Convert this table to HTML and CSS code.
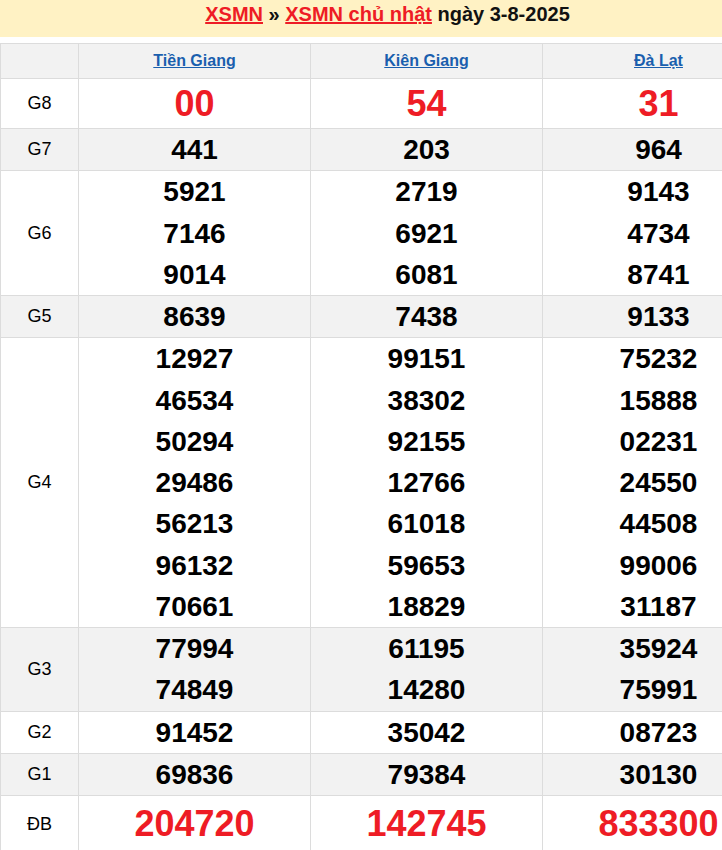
FILE: index.html
```html
<!DOCTYPE html>
<html lang="vi">
<head>
<meta charset="utf-8">
<title>XSMN chủ nhật ngày 3-8-2025</title>
<link rel="stylesheet" href="styles.css">
</head>
<body>
<div class="page">
  <h2 class="title"><a href="#">XSMN</a> » <a href="#">XSMN chủ nhật</a> ngày 3-8-2025</h2>
  <table class="result">
    <colgroup><col class="c-label"><col class="c-prov"><col class="c-prov"><col class="c-prov"></colgroup>
    <tr class="head">
      <th></th>
      <th><a href="#">Tiền Giang</a></th>
      <th><a href="#">Kiên Giang</a></th>
      <th><a href="#">Đà Lạt</a></th>
    </tr>
    <tr class="g8">
      <td class="label">G8</td>
      <td><div class="n big">00</div></td>
      <td><div class="n big">54</div></td>
      <td><div class="n big">31</div></td>
    </tr>
    <tr class="alt">
      <td class="label">G7</td>
      <td><div class="n">441</div></td>
      <td><div class="n">203</div></td>
      <td><div class="n">964</div></td>
    </tr>
    <tr>
      <td class="label">G6</td>
      <td><div class="n">5921</div><div class="n">7146</div><div class="n">9014</div></td>
      <td><div class="n">2719</div><div class="n">6921</div><div class="n">6081</div></td>
      <td><div class="n">9143</div><div class="n">4734</div><div class="n">8741</div></td>
    </tr>
    <tr class="alt">
      <td class="label">G5</td>
      <td><div class="n">8639</div></td>
      <td><div class="n">7438</div></td>
      <td><div class="n">9133</div></td>
    </tr>
    <tr>
      <td class="label">G4</td>
      <td><div class="n">12927</div><div class="n">46534</div><div class="n">50294</div><div class="n">29486</div><div class="n">56213</div><div class="n">96132</div><div class="n">70661</div></td>
      <td><div class="n">99151</div><div class="n">38302</div><div class="n">92155</div><div class="n">12766</div><div class="n">61018</div><div class="n">59653</div><div class="n">18829</div></td>
      <td><div class="n">75232</div><div class="n">15888</div><div class="n">02231</div><div class="n">24550</div><div class="n">44508</div><div class="n">99006</div><div class="n">31187</div></td>
    </tr>
    <tr class="alt">
      <td class="label">G3</td>
      <td><div class="n">77994</div><div class="n">74849</div></td>
      <td><div class="n">61195</div><div class="n">14280</div></td>
      <td><div class="n">35924</div><div class="n">75991</div></td>
    </tr>
    <tr>
      <td class="label">G2</td>
      <td><div class="n">91452</div></td>
      <td><div class="n">35042</div></td>
      <td><div class="n">08723</div></td>
    </tr>
    <tr class="alt">
      <td class="label">G1</td>
      <td><div class="n">69836</div></td>
      <td><div class="n">79384</div></td>
      <td><div class="n">30130</div></td>
    </tr>
    <tr class="db">
      <td class="label">ĐB</td>
      <td><div class="n big">204720</div></td>
      <td><div class="n big">142745</div></td>
      <td><div class="n big">833300</div></td>
    </tr>
  </table>
</div>
</body>
</html>
```

FILE: styles.css
```css
html, body {
  margin: 0;
  padding: 0;
  background: #ffffff;
}

body {
  font-family: "Liberation Sans", Arial, sans-serif;
  color: #000;
}

.page {
  width: 775px;
}

.title {
  margin: 0 0 6px 0;
  height: 37px;
  line-height: 29px;
  background: #fff2c4;
  text-align: center;
  font-size: 20px;
  font-weight: bold;
  color: #111;
}

.title a {
  color: #ee1c25;
  text-decoration: underline;
}

.result {
  width: 775px;
  border-collapse: collapse;
  table-layout: fixed;
}

.c-label {
  width: 78px;
}

.result th,
.result td {
  border: 1px solid #dcdcdc;
  padding: 0;
  text-align: center;
  vertical-align: middle;
}

.head th {
  background: #f2f2f2;
  height: 34px;
  font-size: 16px;
  font-weight: bold;
}

.head a {
  color: #1a5fae;
  text-decoration: underline;
}

.alt td {
  background: #f2f2f2;
}

.label {
  font-size: 18px;
  color: #000;
}

.n {
  font-size: 28px;
  font-weight: bold;
  line-height: 41.25px;
  color: #000;
}

.n.big {
  font-size: 36px;
  color: #ee1c25;
  line-height: 49px;
}

.db .n.big {
  line-height: 56px;
}
```
